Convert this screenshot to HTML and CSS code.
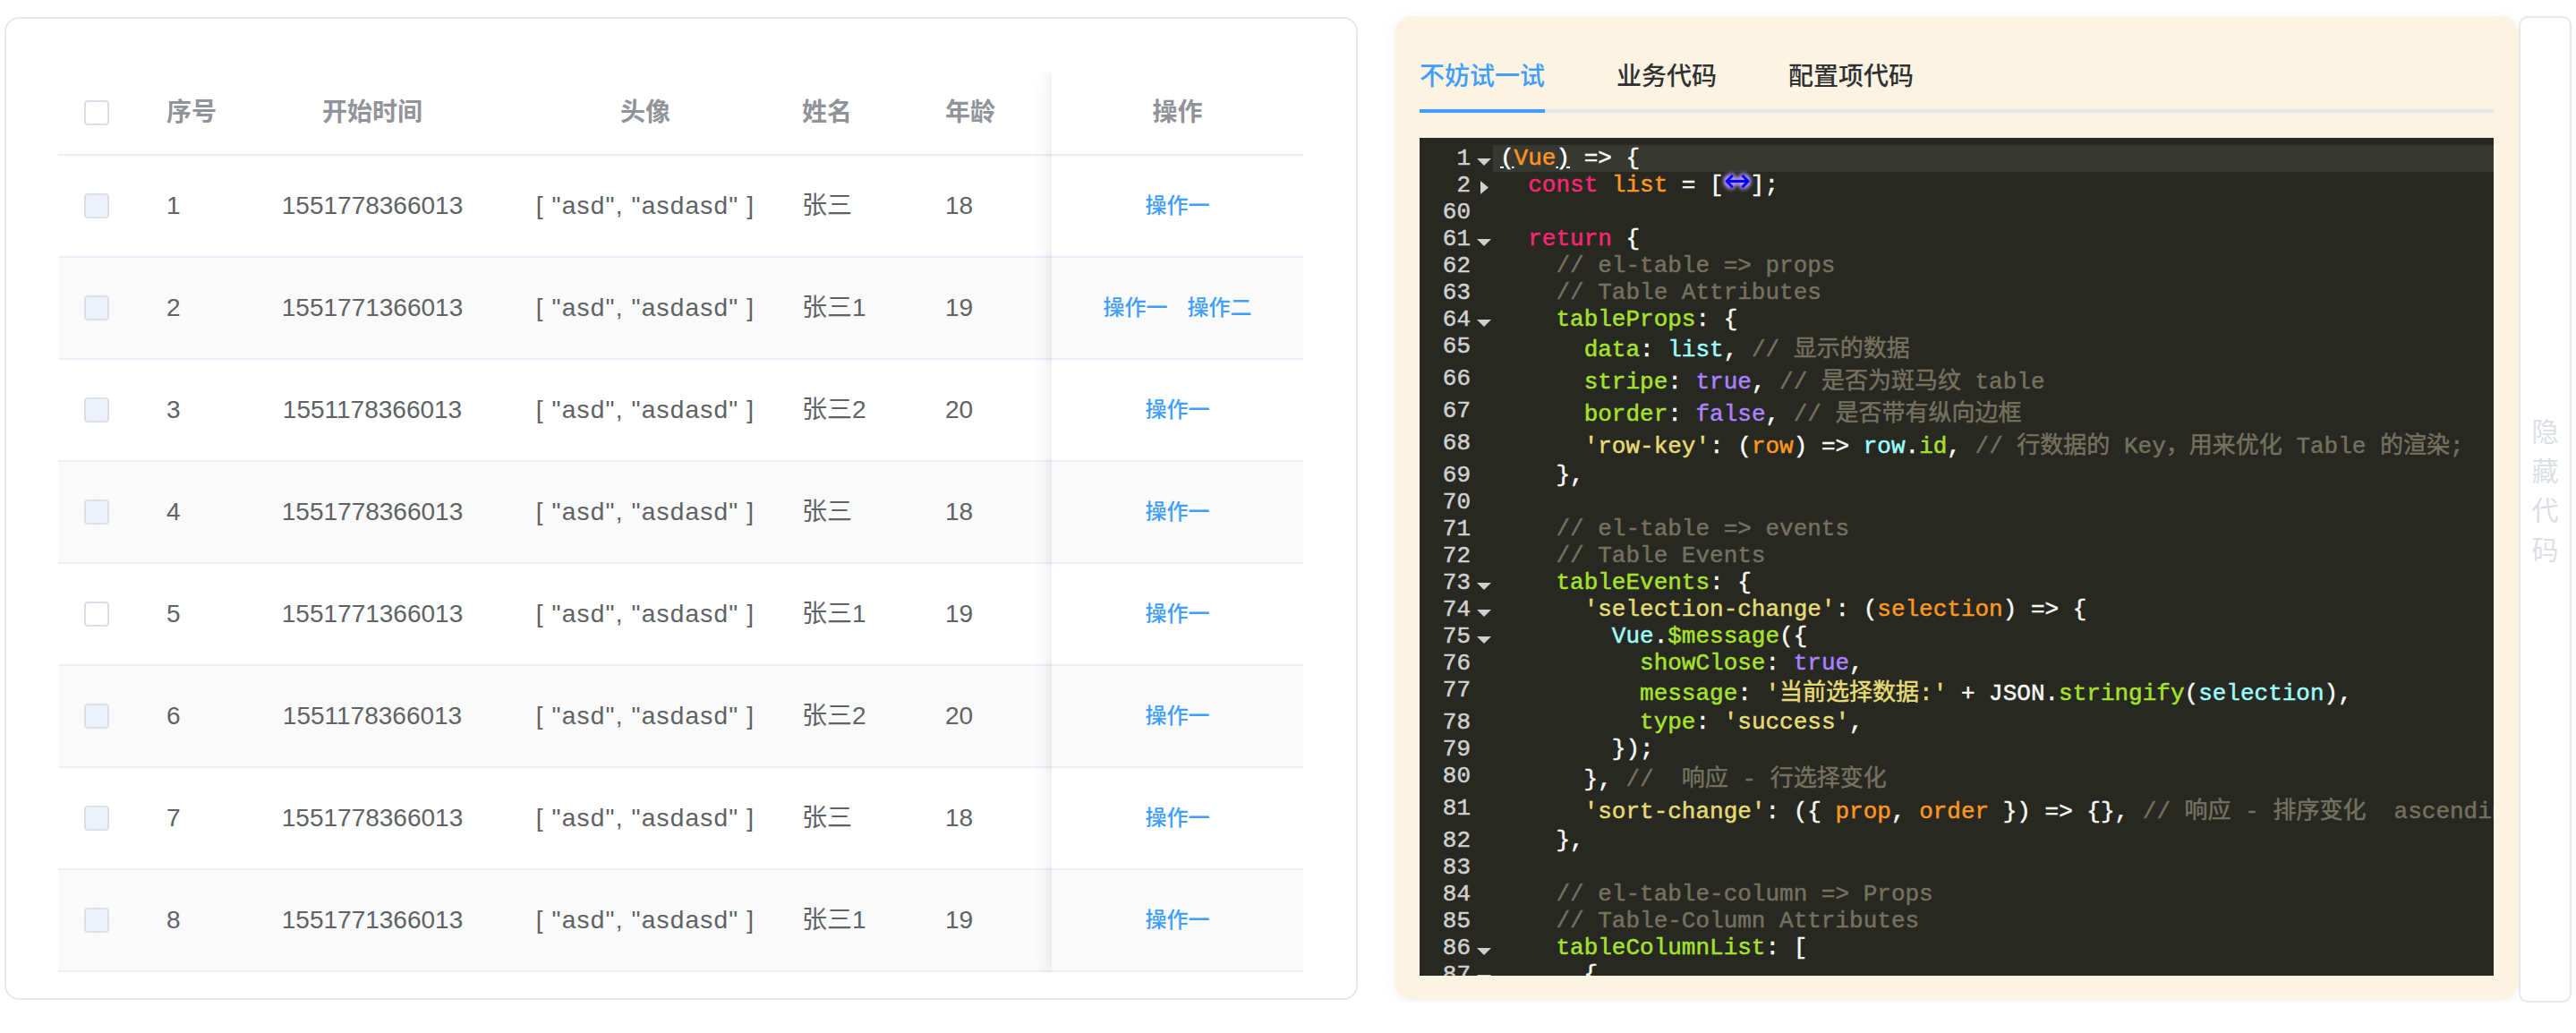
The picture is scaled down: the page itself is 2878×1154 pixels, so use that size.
FILE: index.html
```html
<!DOCTYPE html>
<html lang="zh-CN">
<head>
<meta charset="utf-8">
<title>Table demo</title>
<link rel="stylesheet" href="styles.css">
</head>
<body>
<div class="page">
  <div class="table-card">
    <div class="tbl">
      <div class="tbl-main">
        <div class="tr th">
          <div class="td pl-cb"><span class="cb"></span></div>
          <div class="td pl">序号</div>
          <div class="td center">开始时间</div>
          <div class="td center">头像</div>
          <div class="td pl">姓名</div>
          <div class="td pl">年龄</div>
        </div>
        <div class="tr">
          <div class="td pl-cb"><span class="cb dis"></span></div>
          <div class="td pl">1</div>
          <div class="td center">1551778366013</div>
          <div class="td center av">[ "asd", "asdasd" ]</div>
          <div class="td pl">张三</div>
          <div class="td pl">18</div>
        </div>
        <div class="tr stripe">
          <div class="td pl-cb"><span class="cb dis"></span></div>
          <div class="td pl">2</div>
          <div class="td center">1551771366013</div>
          <div class="td center av">[ "asd", "asdasd" ]</div>
          <div class="td pl">张三1</div>
          <div class="td pl">19</div>
        </div>
        <div class="tr">
          <div class="td pl-cb"><span class="cb dis"></span></div>
          <div class="td pl">3</div>
          <div class="td center">1551178366013</div>
          <div class="td center av">[ "asd", "asdasd" ]</div>
          <div class="td pl">张三2</div>
          <div class="td pl">20</div>
        </div>
        <div class="tr stripe">
          <div class="td pl-cb"><span class="cb dis"></span></div>
          <div class="td pl">4</div>
          <div class="td center">1551778366013</div>
          <div class="td center av">[ "asd", "asdasd" ]</div>
          <div class="td pl">张三</div>
          <div class="td pl">18</div>
        </div>
        <div class="tr">
          <div class="td pl-cb"><span class="cb"></span></div>
          <div class="td pl">5</div>
          <div class="td center">1551771366013</div>
          <div class="td center av">[ "asd", "asdasd" ]</div>
          <div class="td pl">张三1</div>
          <div class="td pl">19</div>
        </div>
        <div class="tr stripe">
          <div class="td pl-cb"><span class="cb dis"></span></div>
          <div class="td pl">6</div>
          <div class="td center">1551178366013</div>
          <div class="td center av">[ "asd", "asdasd" ]</div>
          <div class="td pl">张三2</div>
          <div class="td pl">20</div>
        </div>
        <div class="tr">
          <div class="td pl-cb"><span class="cb dis"></span></div>
          <div class="td pl">7</div>
          <div class="td center">1551778366013</div>
          <div class="td center av">[ "asd", "asdasd" ]</div>
          <div class="td pl">张三</div>
          <div class="td pl">18</div>
        </div>
        <div class="tr stripe">
          <div class="td pl-cb"><span class="cb dis"></span></div>
          <div class="td pl">8</div>
          <div class="td center">1551771366013</div>
          <div class="td center av">[ "asd", "asdasd" ]</div>
          <div class="td pl">张三1</div>
          <div class="td pl">19</div>
        </div>
      </div>
      <div class="tbl-fixed">
        <div class="tr th"><div class="td center">操作</div></div>
        <div class="tr"><div class="td ops"><span class="op">操作一</span></div></div>
        <div class="tr stripe"><div class="td ops"><span class="op">操作一</span><span class="op">操作二</span></div></div>
        <div class="tr"><div class="td ops"><span class="op">操作一</span></div></div>
        <div class="tr stripe"><div class="td ops"><span class="op">操作一</span></div></div>
        <div class="tr"><div class="td ops"><span class="op">操作一</span></div></div>
        <div class="tr stripe"><div class="td ops"><span class="op">操作一</span></div></div>
        <div class="tr"><div class="td ops"><span class="op">操作一</span></div></div>
        <div class="tr stripe"><div class="td ops"><span class="op">操作一</span></div></div>
      </div>
    </div>
  </div>

  <div class="code-panel">
    <div class="tabs">
      <div class="tab active"><span class="tab-label">不妨试一试</span></div>
      <div class="tab"><span class="tab-label">业务代码</span></div>
      <div class="tab"><span class="tab-label">配置项代码</span></div>
    </div>
    <div class="editor">
      <div class="cl active"><span class="ln">1</span><span class="fg open"><svg width="16" height="8" viewBox="0 0 16 8"><path d="M0 0H16L8 8Z"/></svg></span><span class="code"><span class="mb">(</span><span class="d">Vue</span><span class="mb">)</span> =&gt; {</span></div>
      <div class="cl"><span class="ln">2</span><span class="fg folded"><svg width="9" height="15" viewBox="0 0 9 15"><path d="M0 0V15L9 7.5Z"/></svg></span><span class="code">  <span class="k">const</span> <span class="d">list</span> = [<span class="fm">↔</span>];</span></div>
      <div class="cl"><span class="ln">60</span><span class="fg"></span><span class="code"> </span></div>
      <div class="cl"><span class="ln">61</span><span class="fg open"><svg width="16" height="8" viewBox="0 0 16 8"><path d="M0 0H16L8 8Z"/></svg></span><span class="code">  <span class="k">return</span> {</span></div>
      <div class="cl"><span class="ln">62</span><span class="fg"></span><span class="code">    <span class="c">// el-table =&gt; props</span></span></div>
      <div class="cl"><span class="ln">63</span><span class="fg"></span><span class="code">    <span class="c">// Table Attributes</span></span></div>
      <div class="cl"><span class="ln">64</span><span class="fg open"><svg width="16" height="8" viewBox="0 0 16 8"><path d="M0 0H16L8 8Z"/></svg></span><span class="code">    <span class="p">tableProps</span>: {</span></div>
      <div class="cl tall"><span class="ln">65</span><span class="fg"></span><span class="code">      <span class="p">data</span>: <span class="v2">list</span>, <span class="c">// 显示的数据</span></span></div>
      <div class="cl tall"><span class="ln">66</span><span class="fg"></span><span class="code">      <span class="p">stripe</span>: <span class="a">true</span>, <span class="c">// 是否为斑马纹 table</span></span></div>
      <div class="cl tall"><span class="ln">67</span><span class="fg"></span><span class="code">      <span class="p">border</span>: <span class="a">false</span>, <span class="c">// 是否带有纵向边框</span></span></div>
      <div class="cl tall"><span class="ln">68</span><span class="fg"></span><span class="code">      <span class="s">'row-key'</span>: (<span class="d">row</span>) =&gt; <span class="v2">row</span>.<span class="p">id</span>, <span class="c">// 行数据的 Key，用来优化 Table 的渲染;</span></span></div>
      <div class="cl"><span class="ln">69</span><span class="fg"></span><span class="code">    },</span></div>
      <div class="cl"><span class="ln">70</span><span class="fg"></span><span class="code"> </span></div>
      <div class="cl"><span class="ln">71</span><span class="fg"></span><span class="code">    <span class="c">// el-table =&gt; events</span></span></div>
      <div class="cl"><span class="ln">72</span><span class="fg"></span><span class="code">    <span class="c">// Table Events</span></span></div>
      <div class="cl"><span class="ln">73</span><span class="fg open"><svg width="16" height="8" viewBox="0 0 16 8"><path d="M0 0H16L8 8Z"/></svg></span><span class="code">    <span class="p">tableEvents</span>: {</span></div>
      <div class="cl"><span class="ln">74</span><span class="fg open"><svg width="16" height="8" viewBox="0 0 16 8"><path d="M0 0H16L8 8Z"/></svg></span><span class="code">      <span class="s">'selection-change'</span>: (<span class="d">selection</span>) =&gt; {</span></div>
      <div class="cl"><span class="ln">75</span><span class="fg open"><svg width="16" height="8" viewBox="0 0 16 8"><path d="M0 0H16L8 8Z"/></svg></span><span class="code">        <span class="v2">Vue</span>.<span class="p">$message</span>({</span></div>
      <div class="cl"><span class="ln">76</span><span class="fg"></span><span class="code">          <span class="p">showClose</span>: <span class="a">true</span>,</span></div>
      <div class="cl tall"><span class="ln">77</span><span class="fg"></span><span class="code">          <span class="p">message</span>: <span class="s">'当前选择数据:'</span> + JSON.<span class="p">stringify</span>(<span class="v2">selection</span>),</span></div>
      <div class="cl"><span class="ln">78</span><span class="fg"></span><span class="code">          <span class="p">type</span>: <span class="s">'success'</span>,</span></div>
      <div class="cl"><span class="ln">79</span><span class="fg"></span><span class="code">        });</span></div>
      <div class="cl tall"><span class="ln">80</span><span class="fg"></span><span class="code">      }, <span class="c">//  响应 - 行选择变化</span></span></div>
      <div class="cl tall"><span class="ln">81</span><span class="fg"></span><span class="code">      <span class="s">'sort-change'</span>: ({ <span class="d">prop</span>, <span class="d">order</span> }) =&gt; {}, <span class="c">// 响应 - 排序变化  ascending, descending, null</span></span></div>
      <div class="cl"><span class="ln">82</span><span class="fg"></span><span class="code">    },</span></div>
      <div class="cl"><span class="ln">83</span><span class="fg"></span><span class="code"> </span></div>
      <div class="cl"><span class="ln">84</span><span class="fg"></span><span class="code">    <span class="c">// el-table-column =&gt; Props</span></span></div>
      <div class="cl"><span class="ln">85</span><span class="fg"></span><span class="code">    <span class="c">// Table-Column Attributes</span></span></div>
      <div class="cl"><span class="ln">86</span><span class="fg open"><svg width="16" height="8" viewBox="0 0 16 8"><path d="M0 0H16L8 8Z"/></svg></span><span class="code">    <span class="p">tableColumnList</span>: [</span></div>
      <div class="cl"><span class="ln">87</span><span class="fg open"><svg width="16" height="8" viewBox="0 0 16 8"><path d="M0 0H16L8 8Z"/></svg></span><span class="code">      {</span></div>
    </div>
  </div>

  <div class="hide-btn"><span class="hide-text">隐藏代码</span></div>
</div>
</body>
</html>
```

FILE: styles.css
```css
html, body {
  margin: 0;
  padding: 0;
  background: #ffffff;
}

.page {
  display: flex;
  align-items: flex-start;
  padding: 18px 5px 0 5px;
  font-family: "Liberation Sans", "Noto Sans CJK SC", sans-serif;
}

/* ---------- left table card ---------- */
.table-card {
  width: 1512px;
  height: 1098px;
  box-sizing: border-box;
  margin-top: 1px;
  border: 2px solid #e6e8eb;
  border-radius: 16px;
  padding: 59px 59px 29px 58px;
  background: #ffffff;
  flex: none;
}

.tbl {
  display: flex;
}

.tbl-main {
  width: 1110px;
  flex: none;
}

.tbl-fixed {
  width: 281px;
  flex: none;
  position: relative;
  z-index: 1;
  background: #ffffff;
  box-shadow: 0 0 20px rgba(0, 0, 0, 0.12);
  clip-path: inset(0 0 0 -40px);
}

.tr {
  display: grid;
  height: 114px;
  box-sizing: border-box;
  border-bottom: 2px solid #ebeef5;
  align-items: center;
  font-size: 28px;
  color: #606266;
  background: #ffffff;
}

.tbl-main .tr {
  grid-template-columns: 101px 100px 300px 310px 160px 139px;
}

.tbl-fixed .tr {
  grid-template-columns: 281px;
}

.tr.th {
  height: 94px;
  color: #909399;
  font-weight: bold;
}

.tr.stripe {
  background: #fafafa;
}

.td {
  white-space: nowrap;
  line-height: 40px;
}

.td.pl {
  padding-left: 20px;
}

.td.pl-cb {
  padding-left: 29px;
  display: flex;
  align-items: center;
}

.td.center {
  text-align: center;
}

.td.av {
  letter-spacing: 1.2px;
}

.cb {
  display: inline-block;
  width: 28px;
  height: 28px;
  box-sizing: border-box;
  border: 2px solid #dcdfe6;
  border-radius: 4px;
  background: #ffffff;
}

.cb.dis {
  background: #edf2fc;
}

.td.ops {
  display: flex;
  justify-content: center;
  gap: 22px;
}

.op {
  color: #409eff;
  font-size: 24px;
  font-weight: 500;
}

/* ---------- right code panel ---------- */
.code-panel {
  width: 1256px;
  height: 1099px;
  box-sizing: border-box;
  margin-left: 41px;
  padding: 28px 28px 0 28px;
  background: #fcf3e2;
  border-radius: 20px;
  box-shadow: 0 2px 16px rgba(90, 100, 180, 0.08);
  flex: none;
}

.tabs {
  display: flex;
  height: 80px;
  margin-bottom: 28px;
  box-shadow: inset 0 -4px 0 #e4e7ed;
}

.tab {
  padding: 0 40px;
}

.tab:first-child {
  padding-left: 0;
}

.tab-label {
  display: block;
  height: 80px;
  box-sizing: border-box;
  line-height: 80px;
  font-size: 28px;
  font-weight: 500;
  color: #303133;
}

.tab.active .tab-label {
  color: #409eff;
  border-bottom: 4px solid #409eff;
}

.editor {
  height: 936px;
  box-sizing: border-box;
  padding-top: 8px;
  background: #272822;
  overflow: hidden;
  font-family: "Liberation Mono", "Noto Sans CJK SC", monospace;
  font-size: 26px;
  color: #f8f8f2;
  -webkit-text-stroke: 0.5px currentColor;
}

.cl {
  display: flex;
  height: 30px;
}

.cl.tall {
  height: 36px;
}

.ln {
  width: 57px;
  flex: none;
  text-align: right;
  line-height: 30px;
  color: #d0d0d0;
}

.fg {
  width: 25px;
  flex: none;
  display: flex;
  align-items: flex-start;
  fill: #cfcfcf;
}

.fg.open {
  padding-top: 15px;
  padding-left: 7px;
  box-sizing: border-box;
}

.fg.folded {
  padding-top: 10px;
  padding-left: 11px;
  box-sizing: border-box;
}

.fg svg {
  display: block;
}

.code {
  flex: 1;
  padding-left: 8px;
  white-space: pre;
  line-height: 30px;
}

.cl.tall .code {
  line-height: 38px;
}

.cl.active .code {
  background: #373831;
}

.mb {
  color: #ffffff;
  text-decoration: underline;
}

.k { color: #f92672; }
.d { color: #fd971f; }
.v2 { color: #9effff; }
.p { color: #a6e22e; }
.s { color: #e6db74; }
.c { color: #75715e; }
.a { color: #ae81ff; }

.fm {
  color: #0000ff;
  font-family: "DejaVu Sans", sans-serif;
  font-size: 36px;
  line-height: 0.3;
  -webkit-text-stroke: 0;
  text-shadow: #b9f 2px 2px 4px, #b9f -2px -2px 4px, #b9f 2px -2px 4px, #b9f -2px 2px 4px;
}

/* ---------- hide code button ---------- */
.hide-btn {
  width: 59px;
  height: 1102px;
  box-sizing: border-box;
  border: 2px solid #e6e8eb;
  border-radius: 10px;
  background: #ffffff;
  display: flex;
  align-items: center;
  justify-content: center;
  padding-bottom: 28px;
  flex: none;
}

.hide-text {
  writing-mode: vertical-rl;
  font-family: "Noto Sans CJK SC", sans-serif;
  font-size: 30px;
  letter-spacing: 14px;
  color: #dcdfe6;
}
```
